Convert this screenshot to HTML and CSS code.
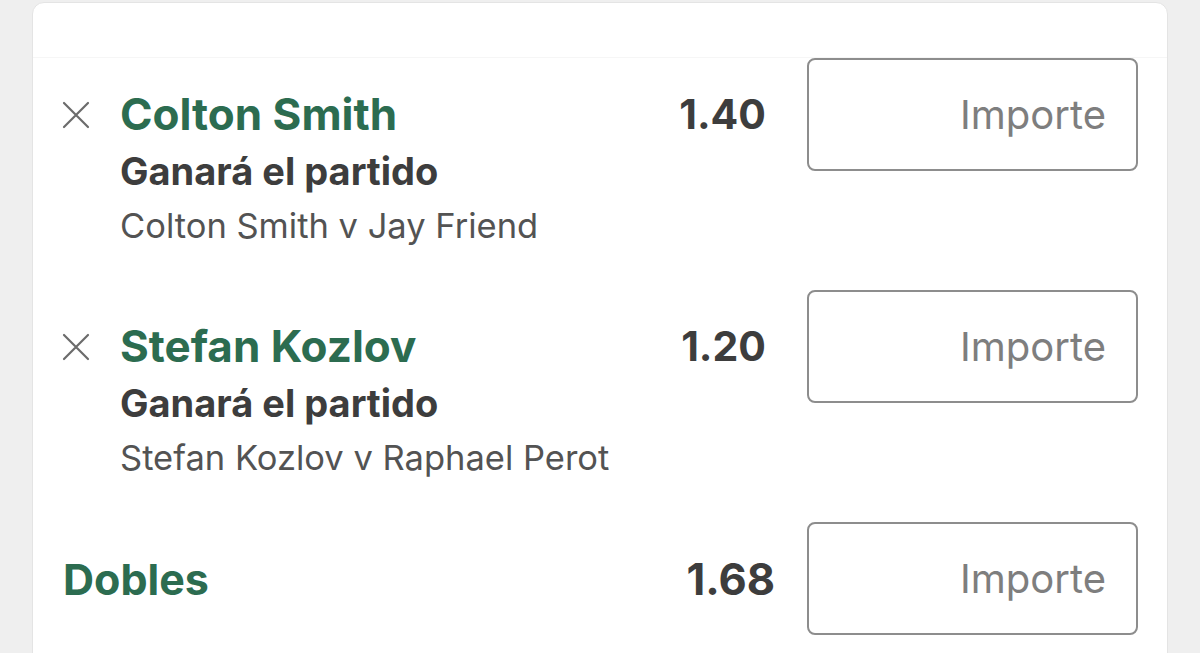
FILE: index.html
```html
<!DOCTYPE html>
<html lang="es">
<head>
<meta charset="utf-8">
<title>Boleto</title>
<link rel="stylesheet" href="styles.css">
</head>
<body>
<div class="card">
  <div class="card-head"></div>

  <div class="bet">
    <button class="remove" aria-label="Eliminar">
      <svg viewBox="0 0 28 28" width="28" height="28"><path d="M2 2 L26 26 M26 2 L2 26" stroke="#6b6b6b" stroke-width="2.2" stroke-linecap="round" fill="none"/></svg>
    </button>
    <div class="bet-info">
      <div class="selection">Colton Smith</div>
      <div class="market">Ganará el partido</div>
      <div class="event">Colton Smith v Jay Friend</div>
    </div>
    <div class="odds">1.40</div>
    <input class="stake" type="text" placeholder="Importe">
  </div>

  <div class="bet">
    <button class="remove" aria-label="Eliminar">
      <svg viewBox="0 0 28 28" width="28" height="28"><path d="M2 2 L26 26 M26 2 L2 26" stroke="#6b6b6b" stroke-width="2.2" stroke-linecap="round" fill="none"/></svg>
    </button>
    <div class="bet-info">
      <div class="selection">Stefan Kozlov</div>
      <div class="market">Ganará el partido</div>
      <div class="event">Stefan Kozlov v Raphael Perot</div>
    </div>
    <div class="odds">1.20</div>
    <input class="stake" type="text" placeholder="Importe">
  </div>

  <div class="multi">
    <div class="multi-name">Dobles</div>
    <div class="multi-odds">1.68</div>
    <input class="stake" type="text" placeholder="Importe">
  </div>
</div>
</body>
</html>
```
FILE: styles.css
```css
html, body {
  margin: 0;
  padding: 0;
  height: 100%;
  overflow: hidden;
  background: #efefef;
  font-family: Inter, "Liberation Sans", Arial, sans-serif;
}

.card {
  margin: 2px 0 0 32px;
  width: 1136px;
  box-sizing: border-box;
  min-height: 700px;
  background: #ffffff;
  border: 1px solid #e4e4e4;
  border-radius: 12px 12px 0 0;
}

.card-head {
  height: 54px;
  border-bottom: 1px solid #f6f6f6;
}

.bet {
  display: flex;
  align-items: flex-start;
  height: 232px;
  padding: 0 29px;
}

.remove {
  flex: none;
  width: 28px;
  height: 28px;
  margin: 43px 30px 0 0;
  padding: 0;
  border: 0;
  background: none;
  display: block;
}

.remove svg { display: block; }

.bet-info {
  flex: 1;
  padding-top: 30px;
}

.selection {
  font-size: 44px;
  line-height: 52px;
  font-weight: 700;
  color: #2c6c50;
}

.market {
  margin-top: 4px;
  font-size: 38px;
  line-height: 54px;
  font-weight: 700;
  color: #3d3d3d;
}

.event {
  font-size: 34.5px;
  line-height: 55px;
  font-weight: 400;
  color: #535353;
}

.odds {
  flex: none;
  padding-top: 30px;
  margin-right: 41px;
  font-size: 41px;
  line-height: 52px;
  font-weight: 700;
  color: #3d3d3d;
}

.stake {
  flex: none;
  box-sizing: border-box;
  width: 331px;
  height: 113px;
  margin: 0;
  padding: 0 30px 0 10px;
  border: 2px solid #8d8d8d;
  border-radius: 8px;
  background: #ffffff;
  text-align: right;
  font-family: inherit;
  font-size: 40px;
  color: #3d3d3d;
  outline: none;
}

.stake::placeholder {
  color: #7e7e7e;
  opacity: 1;
}

.multi {
  display: flex;
  align-items: center;
  padding: 0 29px 0 30px;
}

.multi-name {
  flex: 1;
  font-size: 43px;
  line-height: 52px;
  font-weight: 700;
  color: #2c6c50;
}

.multi-odds {
  flex: none;
  margin-right: 32px;
  font-size: 43.5px;
  line-height: 52px;
  font-weight: 700;
  color: #3d3d3d;
}
```
